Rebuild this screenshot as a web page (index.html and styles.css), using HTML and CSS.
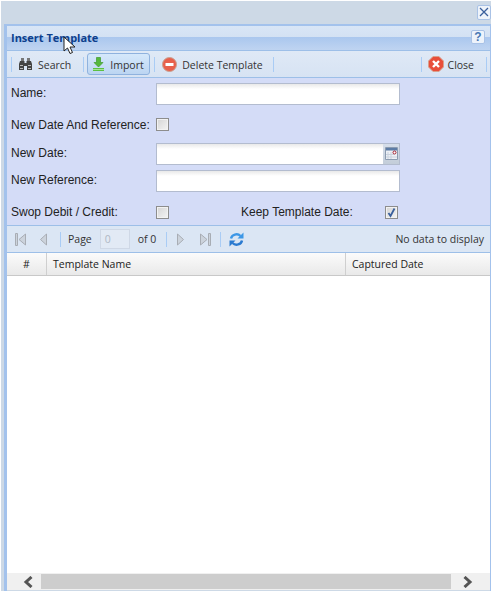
FILE: index.html
```html
<!DOCTYPE html>
<html lang="en">
<head>
    <meta charset="UTF-8">
    <title>Insert Template</title>
    <link rel="stylesheet" href="styles.css">
</head>
<body>
    <div class="window">
        <div class="topbar">
            <div class="win-close">
                <svg width="12" height="12" viewBox="0 0 12 12"><path d="M2 2L10 10M10 2L2 10" stroke="#3a5f9c" stroke-width="1.3" fill="none"/></svg>
            </div>
        </div>
        <div class="panel">
            <div class="title-bar">
                <span class="title">Insert Template</span>
                <div class="help">?</div>
            </div>
            <div class="toolbar">
                <span class="sep"></span>
                <div class="tool tool-search">
                    <svg width="13" height="12" viewBox="0 0 13 12"><path d="M2 0h3v3H2zM8 0h3v3H8z" fill="#777"/><path d="M1 3h4.500v2h2V3H12l1 3v6H8V8H5v4H0V6z" fill="#444"/><path d="M1 7h3v1H1zM9 7h3v1H9zM1 10h3v1H1zM9 10h3v1H9z" fill="#bbb"/></svg>
                    <span>Search</span>
                </div>
                <span class="sep"></span>
                <div class="tool tool-active">
                    <svg width="11" height="14" viewBox="0 0 11 14"><path d="M3.500 .5h4v5H10L5.500 10 1 5.500h2.500z" fill="#55b83c" stroke="#3f9a2c" stroke-width=".7"/><path d="M0 11h11v3H0z" fill="#5cc043"/><path d="M0 12h11v1H0z" fill="#a4e494"/></svg>
                    <span>Import</span>
                </div>
                <span class="sep"></span>
                <div class="tool tool-delete">
                    <svg width="15" height="15" viewBox="0 0 15 15"><circle cx="7.500" cy="7.500" r="7" fill="#e8604c" stroke="#c9a090"/><path d="M3.500 6h8v3h-8z" fill="#fff"/></svg>
                    <span>Delete Template</span>
                </div>
                <span class="sep"></span>
                <span class="spacer"></span>
                <span class="sep"></span>
                <div class="tool tool-close">
                    <svg width="16" height="16" viewBox="0 0 16 16"><path d="M5 .5h6L15.500 5v6L11 15.500H5L.5 11V5z" fill="#e84e3a" stroke="#d8a08c"/><path d="M5 5l6 6M11 5l-6 6" stroke="#fff" stroke-width="2.400" fill="none"/></svg>
                    <span>Close</span>
                </div>
                <span class="sep"></span>
            </div>
            <div class="form">
                <div class="row row-name">
                    <label class="lbl">Name:</label>
                    <div class="input"></div>
                </div>
                <div class="row row-check">
                    <label class="lbl">New Date And Reference:</label>
                    <span class="check"></span>
                </div>
                <div class="row row-date">
                    <label class="lbl">New Date:</label>
                    <div class="input input-date"></div>
                    <div class="trigger">
                        <svg width="13" height="13" viewBox="0 0 13 13"><path d="M.5 .5h12v12H.5z" fill="#eef1f6" stroke="#8b9bb0"/><path d="M1 1h11v2.500H1z" fill="#5d7ca6"/><path d="M3 5v7M6 5v7M1 7.500h8M1 10h11" stroke="#c9d2de"/><circle cx="9.500" cy="5.500" r="1.500" fill="#fff" stroke="#a01c2c"/></svg>
                    </div>
                </div>
                <div class="row row-ref">
                    <label class="lbl">New Reference:</label>
                    <div class="input"></div>
                </div>
                <div class="row row-swop">
                    <label class="lbl">Swop Debit / Credit:</label>
                    <span class="check"></span>
                    <label class="lbl lbl-keep">Keep Template Date:</label>
                    <span class="check check-on">
                        <svg width="11" height="11" viewBox="0 0 11 11"><path d="M2.500 6l2 3L8.500 1.500" stroke="#3a5f9c" stroke-width="1.800" fill="none"/></svg>
                    </span>
                </div>
            </div>
            <div class="grid-wrap">
                <div class="pager">
                    <svg class="pg pg-first" width="11" height="13" viewBox="0 0 11 13"><path d="M.5 .5h2v12h-2z" fill="#ccd3dc" stroke="#a8adb4"/><path d="M10.500 1v11L4 6.500z" fill="#ccd3dc" stroke="#a8adb4"/></svg>
                    <svg class="pg pg-prev" width="7" height="13" viewBox="0 0 7 13"><path d="M6.500 1v11L.5 6.500z" fill="#ccd3dc" stroke="#a8adb4"/></svg>
                    <span class="sep"></span>
                    <span class="pg-page">Page</span>
                    <div class="pg-input">0</div>
                    <span class="pg-of">of 0</span>
                    <span class="sep"></span>
                    <svg class="pg pg-next" width="7" height="13" viewBox="0 0 7 13"><path d="M.5 1v11l6-5.500z" fill="#ccd3dc" stroke="#a8adb4"/></svg>
                    <svg class="pg pg-last" width="11" height="13" viewBox="0 0 11 13"><path d="M.5 1v11L7 6.500z" fill="#ccd3dc" stroke="#a8adb4"/><path d="M8.500 .5h2v12h-2z" fill="#ccd3dc" stroke="#a8adb4"/></svg>
                    <span class="sep"></span>
                    <svg class="pg pg-refresh" width="15" height="15" viewBox="0 0 15 15"><path d="M2 6.500A5.500 5 0 0 1 11.500 4" stroke="#3d97e6" stroke-width="2.400" fill="none"/><path d="M14.500 .5v6h-6z" fill="#3d97e6"/><path d="M13 8.500A5.500 5 0 0 1 3.500 11" stroke="#2a7ad0" stroke-width="2.400" fill="none"/><path d="M.5 14.500v-6h6z" fill="#2a7ad0"/></svg>
                    <span class="spacer"></span>
                    <span class="pg-info">No data to display</span>
                </div>
                <div class="grid-head">
                    <div class="col col-num">#</div>
                    <div class="col col-name">Template Name</div>
                    <div class="col col-date">Captured Date</div>
                </div>
                <div class="grid-body"></div>
                <div class="hscroll">
                    <svg class="arrow arrow-left" width="10" height="12" viewBox="0 0 10 12"><path d="M8.500 1L3 6l5.500 5" stroke="#555" stroke-width="3" fill="none"/></svg>
                    <div class="thumb"></div>
                    <svg class="arrow arrow-right" width="10" height="12" viewBox="0 0 10 12"><path d="M1.500 1L7 6l-5.500 5" stroke="#555" stroke-width="3" fill="none"/></svg>
                </div>
            </div>
        </div>
    </div>
    <svg class="cursor" width="13" height="19" viewBox="0 0 13 19"><path d="M1 1v14l3.500-3 2.500 5.500 2.500-1L7 11h5z" fill="#fff" stroke="#222"/></svg>
</body>
</html>
```

FILE: styles.css
```css
html, body {
    margin: 0;
    padding: 0;
    background-color: #fff;
    height: 591px;
    overflow: hidden;
}
body {
    position: relative;
    font-family: "Liberation Sans", Arial, sans-serif;
    font-size: 12px;
    color: #222;
}
.window {
    margin: 1px 0 0 1px;
    width: 490px;
    height: 590px;
    padding-left: 3px;
    box-sizing: border-box;
    background-color: #cdd9e6;
    display: flex;
    flex-direction: column;
}
.topbar {
    height: 23px;
    flex: none;
    display: flex;
    justify-content: flex-end;
    align-items: center;
}
.win-close {
    width: 12px;
    height: 13px;
    margin-top: -1px;
    background-color: #eef3fa;
    border: 1px solid #a9c2e6;
    border-radius: 2px;
    display: flex;
    align-items: center;
    justify-content: center;
}
.panel {
    flex: 1;
    min-height: 0;
    display: flex;
    flex-direction: column;
    border-left: 3px solid #a3c2ec;
    border-right: 1px solid #a3c2ec;
    border-top: 2px solid #a3c2ec;
}

/* title */
.title-bar {
    height: 24px;
    flex: none;
    display: flex;
    align-items: center;
    justify-content: space-between;
    padding: 0 5px 0 4px;
    background: linear-gradient(to bottom, #d9e6f6 0, #d3e1f3 11px, #aac7ee 11px, #bfd4f1 100%);
    border-bottom: 1px solid #9dbfe8;
}
.title {
    font-family: "Open Sans", sans-serif;
    font-weight: bold;
    font-size: 11px;
    color: #0d3f8c;
    margin-top: -2px;
}
.help {
    width: 12px;
    height: 12px;
    margin-top: -2px;
    border: 1px solid #a9c2e6;
    border-radius: 2px;
    background-color: #edf3fb;
    color: #4a78b4;
    font-weight: bold;
    font-size: 12px;
    line-height: 12px;
    text-align: center;
}

/* toolbar */
.toolbar {
    height: 26px;
    flex: none;
    display: flex;
    align-items: center;
    padding: 0 3px 0 4px;
    background: linear-gradient(to bottom, #dfe9f6, #d7e3f3);
    border-bottom: 1px solid #9dbfe8;
    font-family: "Open Sans", sans-serif;
    font-size: 10.5px;
    color: #333;
}
.sep {
    width: 1px;
    height: 15px;
    flex: none;
    background-color: #a9ccf5;
}
.spacer {
    flex: 1;
}
.tool {
    display: flex;
    align-items: center;
    gap: 6px;
}
.tool span {
    margin-top: 1px;
}
.tool-search {
    margin: 0 12px 0 7px;
}
.tool-active {
    margin: 0 4px 0 3px;
    width: 63px;
    height: 22px;
    box-sizing: border-box;
    padding-left: 5px;
    gap: 6px;
    border: 1px solid #8fb2de;
    border-radius: 3px;
    background: linear-gradient(to bottom, #d5e8fb, #bcd5f2);
}
.tool-delete {
    margin: 0 10px 0 7px;
    gap: 5px;
}
.tool-close {
    margin: 0 12px 0 6px;
    gap: 4px;
}

/* form */
.form {
    flex: none;
    height: 148px;
    box-sizing: border-box;
    padding: 5px 0 0 4px;
    background-color: #d4dcf7;
    border-bottom: 1px solid #9dbfe8;
    display: flex;
    flex-direction: column;
}
.row {
    display: flex;
    align-items: center;
}
.lbl {
    width: 145px;
    flex: none;
}
.row-name .lbl, .row-date .lbl, .row-ref .lbl {
    padding-bottom: 2px;
}
.input {
    width: 244px;
    height: 22px;
    box-sizing: border-box;
    border: 1px solid #b3bccf;
    background: linear-gradient(to bottom, #e9e9e9 0, #fff 5px);
}
.input-date {
    width: 227px;
    border-right: none;
}
.trigger {
    width: 17px;
    height: 22px;
    box-sizing: border-box;
    border: 1px solid #b3bccf;
    border-left: none;
    background: linear-gradient(to bottom, #d6deea, #c3cdd9);
    display: flex;
    align-items: flex-start;
    justify-content: center;
    padding-top: 3px;
}
.check {
    flex: none;
    width: 11px;
    height: 11px;
    border: 1px solid #8d8d8d;
    background: linear-gradient(to bottom right, #d4d4d4, #f4f4f4);
    box-shadow: inset 0 0 0 1px #f2f2f2;
    display: flex;
}
.check-on {
    margin-left: 32px;
}
.lbl-keep {
    width: auto;
    margin-left: 72px;
}
.row-check {
    margin-top: 13px;
    height: 13px;
}
.row-date {
    margin-top: 12px;
}
.row-ref {
    margin-top: 5px;
}
.row-swop {
    margin-top: 13px;
    height: 14px;
}

/* pager and grid */
.grid-wrap {
    flex: 1;
    min-height: 0;
    display: flex;
    flex-direction: column;
}
.pager {
    height: 26px;
    flex: none;
    display: flex;
    align-items: center;
    padding: 0 6px 0 8px;
    background-color: #dbe6f4;
    border-bottom: 1px solid #9dbfe8;
    font-family: "Open Sans", sans-serif;
    font-size: 10.5px;
    color: #333;
}
.pg {
    flex: none;
}
.pg-prev {
    margin-left: 14px;
    margin-right: 13px;
}
.pg-page {
    margin-left: 7px;
}
.pg-input {
    width: 30px;
    height: 20px;
    box-sizing: border-box;
    margin: 0 8px;
    padding-left: 4px;
    border: 1px solid #cfd8e6;
    background-color: #e2eaf5;
    color: #b0b8c4;
    line-height: 18px;
}
.pg-of {
    margin-right: 10px;
}
.pg-next {
    margin-left: 10px;
    margin-right: 16px;
}
.pg-last {
    margin-right: 9px;
}
.pg-refresh {
    margin-left: 8px;
}
.grid-head {
    height: 22px;
    flex: none;
    display: flex;
    background: linear-gradient(to bottom, #fbfbfb, #e9e9e9);
    border-bottom: 1px solid #c8c8c8;
    font-family: "Open Sans", sans-serif;
    font-size: 10.5px;
    color: #222;
}
.col {
    box-sizing: border-box;
    line-height: 22px;
    padding-left: 6px;
    border-right: 1px solid #cfcfcf;
}
.col-num {
    width: 40px;
    padding-left: 0;
    text-align: center;
}
.col-name {
    width: 299px;
}
.col-date {
    flex: 1;
    border-right: none;
}
.grid-body {
    flex: 1;
    background-color: #fff;
}
.hscroll {
    height: 17px;
    flex: none;
    margin-bottom: 1px;
    display: flex;
    align-items: center;
    background-color: #f0f0f0;
}
.arrow {
    flex: none;
}
.arrow-left {
    margin: 0 8px 0 16px;
}
.arrow-right {
    margin: 0 17px 0 12px;
}
.thumb {
    flex: 1;
    height: 15px;
    background-color: #cdcdcd;
}
.cursor {
    position: absolute;
    left: 63px;
    top: 36px;
}
```
